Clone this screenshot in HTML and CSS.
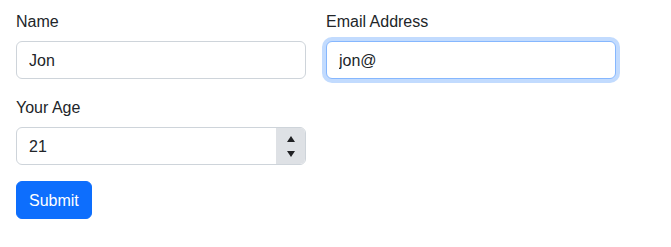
FILE: index.html
```html
<!DOCTYPE html>
<html lang="en">
<head>
<meta charset="utf-8">
<title>Form</title>
<link rel="stylesheet" href="styles.css">
</head>
<body>
<form class="form">
  <div class="row">
    <div class="field">
      <label class="label" for="name">Name</label>
      <input class="control" id="name" type="text" value="Jon">
    </div>
    <div class="field">
      <label class="label" for="email">Email Address</label>
      <input class="control focused" id="email" type="text" value="jon@">
    </div>
  </div>
  <div class="row">
    <div class="field">
      <label class="label" for="age">Your Age</label>
      <div class="number">
        <input class="number-input" id="age" type="text" value="21">
        <div class="spinner">
          <span class="tri up"></span>
          <span class="tri down"></span>
        </div>
      </div>
    </div>
  </div>
  <button class="btn" type="button">Submit</button>
</form>
</body>
</html>
```
FILE: styles.css
```css
* { box-sizing: border-box; }
html, body { margin: 0; background: #fff; }
body {
  font-family: "Liberation Sans", Arial, sans-serif;
  font-size: 16px;
  line-height: 24px;
  color: #212529;
}
.form {
  padding: 9px 16px 0 16px;
}
.row {
  display: grid;
  grid-template-columns: 290px 290px;
  column-gap: 20px;
  margin-bottom: 16px;
}
.field { display: flex; flex-direction: column; }
.label {
  display: block;
  padding-top: 1px;
  margin-bottom: 7px;
  line-height: 24px;
}
.control, .number {
  height: 38px;
  width: 100%;
  border: 1px solid #ced4da;
  border-radius: 6px;
  background: #fff;
}
.control {
  padding: 7px 12px 5px 12px;
  font: inherit;
  color: #212529;
  outline: none;
}
.focused {
  border-color: #86b7fe;
  box-shadow: 0 0 0 4px rgba(13, 110, 253, 0.25);
}
.number {
  display: flex;
  overflow: hidden;
}
.number-input {
  flex: 1;
  min-width: 0;
  border: 0;
  padding: 7px 12px 5px 12px;
  font: inherit;
  color: #212529;
  background: transparent;
  outline: none;
}
.spinner {
  width: 29px;
  background: #dee1e5;
  display: flex;
  flex-direction: column;
  align-items: center;
  justify-content: center;
  gap: 9px;
  padding-left: 1px;
}
.tri {
  width: 0;
  height: 0;
  border-left: 4px solid transparent;
  border-right: 4px solid transparent;
}
.up { border-bottom: 6px solid #202124; }
.down { border-top: 6px solid #202124; }
.btn {
  display: inline-block;
  height: 38px;
  padding: 7px 12px 5px 12px;
  font: inherit;
  line-height: 24px;
  color: #fff;
  background: #0d6efd;
  border: 1px solid #0d6efd;
  border-radius: 6px;
}
```
